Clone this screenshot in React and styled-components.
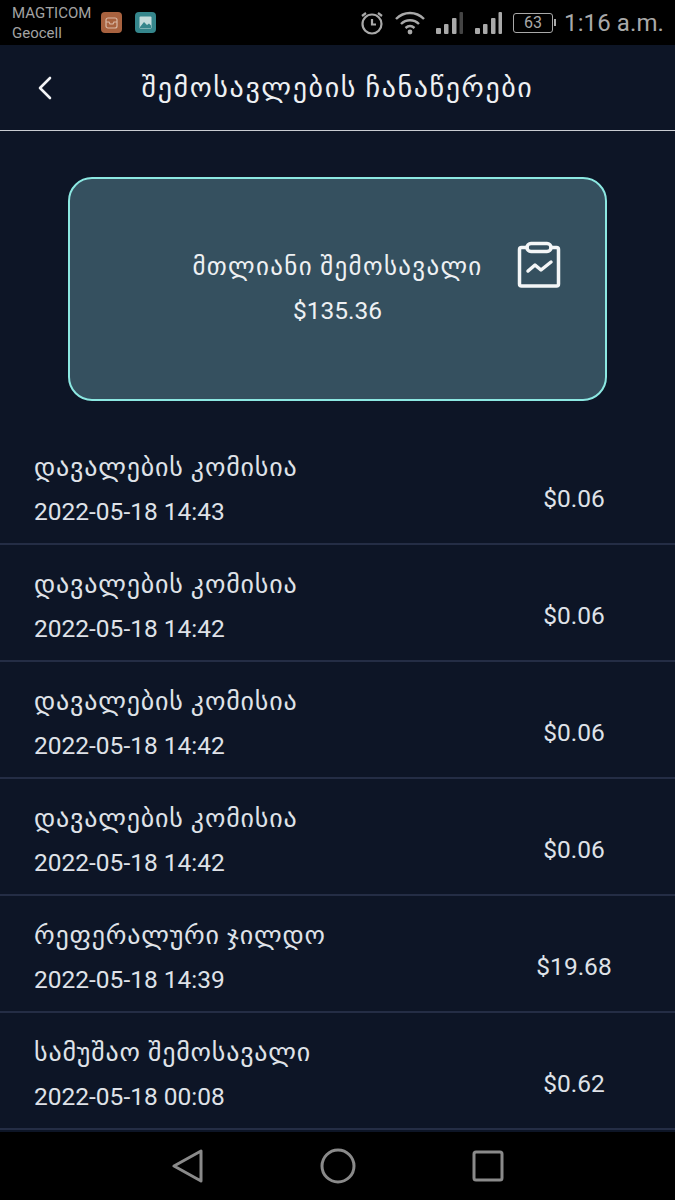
import React from "react";
import styled, { createGlobalStyle } from "styled-components";

const Global = createGlobalStyle`
  html, body { margin: 0; padding: 0; background: #0d1526; }
  #root { width: 675px; height: 1200px; }
  * { box-sizing: border-box; }
`;

const FONT = `Roboto, "DejaVu Sans", sans-serif`;

const Screen = styled.div`
  width: 675px;
  height: 1200px;
  display: flex;
  flex-direction: column;
  overflow: hidden;
  background: #0d1526;
  font-family: ${FONT};
`;

const StatusBar = styled.div`
  height: 45px;
  flex: none;
  background: #000;
  color: #a9a9a9;
  display: flex;
  align-items: center;
  padding: 0 11px 0 12px;
`;

const Carrier = styled.div`
  font-size: 15px;
  line-height: 20px;
  width: 89px;
  flex: none;
  color: #a3a3a3;
`;

const AppIcon = styled.div`
  width: 21px;
  height: 21px;
  border-radius: 4px;
  background: ${(p) => p.$bg};
  margin-right: 13px;
  display: flex;
  align-items: center;
  justify-content: center;
  flex: none;
`;

const StatusRight = styled.div`
  margin-left: auto;
  display: flex;
  align-items: center;
`;

const BatteryBox = styled.div`
  width: 40px;
  height: 20px;
  border: 1.5px solid #a9a9a9;
  border-radius: 3px;
  font-size: 16px;
  line-height: 17px;
  text-align: center;
  margin-left: 11px;
  position: relative;
  &::after {
    content: "";
    position: absolute;
    right: -4px;
    top: 5px;
    width: 2px;
    height: 7px;
    background: #a9a9a9;
  }
`;

const Clock = styled.div`
  font-size: 24px;
  margin-left: 11px;
  letter-spacing: 0.1px;
  color: #a9a9a9;
`;

const Header = styled.div`
  height: 86px;
  flex: none;
  display: flex;
  align-items: center;
  justify-content: center;
  position: relative;
  border-bottom: 1px solid #c9ccd2;
`;

const BackButton = styled.div`
  position: absolute;
  left: 36px;
  top: 30px;
  width: 18px;
  height: 26px;
  display: flex;
`;

const Title = styled.div`
  font-size: 28px;
  letter-spacing: 1.6px;
  color: #eef0f3;
`;

const Card = styled.div`
  margin: 46px 68px 27px;
  height: 224px;
  flex: none;
  border: 2px solid #8ce8e2;
  border-radius: 24px;
  background: #35505f;
  display: flex;
  flex-direction: column;
  align-items: center;
  padding-top: 70px;
  gap: 11px;
  position: relative;
  color: #eef0f3;
`;

const CardLabel = styled.div`
  font-size: 25px;
  letter-spacing: 1.3px;
  line-height: 36px;
`;

const CardValue = styled.div`
  font-size: 24.5px;
  line-height: 30px;
`;

const CardIcon = styled.div`
  position: absolute;
  left: 446px;
  top: 62px;
  display: flex;
`;

const List = styled.div`
  flex: 1;
  min-height: 0;
`;

const Row = styled.div`
  height: 117px;
  border-bottom: 2px solid #242d45;
  padding: 0 41px 0 34px;
  display: flex;
  align-items: center;
  justify-content: space-between;
  color: #dfe2e8;
`;

const RowText = styled.div`
  display: flex;
  flex-direction: column;
  gap: 13px;
  margin-top: 7px;
`;

const RowTitle = styled.div`
  font-size: 26px;
  letter-spacing: 0.8px;
  line-height: 32px;
`;

const RowDate = styled.div`
  font-size: 24.5px;
  line-height: 32px;
`;

const Amount = styled.div`
  width: 120px;
  text-align: center;
  font-size: 24.5px;
  margin-top: 26px;
`;

const NavBar = styled.div`
  height: 68px;
  flex: none;
  background: #000;
  display: grid;
  grid-template-columns: 150px 150px 150px;
  justify-content: center;
  align-items: center;
  justify-items: center;
`;

const rows = [
  ["დავალების კომისია", "2022-05-18 14:43", "$0.06"],
  ["დავალების კომისია", "2022-05-18 14:42", "$0.06"],
  ["დავალების კომისია", "2022-05-18 14:42", "$0.06"],
  ["დავალების კომისია", "2022-05-18 14:42", "$0.06"],
  ["რეფერალური ჯილდო", "2022-05-18 14:39", "$19.68"],
  ["სამუშაო შემოსავალი", "2022-05-18 00:08", "$0.62"],
];

const SignalBars = ({ dim, style }) => (
  <svg style={style} width="27" height="22" viewBox="0 0 27 22" fill="#a9a9a9">
    <rect x="0" y="16" width="5" height="6" rx="1" />
    <rect x="8" y="12" width="4.5" height="10" rx="1" />
    <rect x="16" y="6" width="4.5" height="16" rx="1" />
    <rect x="23.5" y="0" width="3.5" height="22" rx="1" fill={dim ? "#444" : "#a9a9a9"} />
  </svg>
);

export default function App() {
  return (
    <Screen>
      <Global />
      <StatusBar>
        <Carrier>MAGTICOM<br />Geocell</Carrier>
        <AppIcon $bg="#a8623f">
          <svg width="13" height="12" viewBox="0 0 13 12" fill="none" stroke="#d9b8a5" strokeWidth="1.2"><rect x="1" y="1" width="11" height="10" rx="2" /><path d="M1 5h3l1 2h3l1-2h3" /></svg>
        </AppIcon>
        <AppIcon $bg="#35868c">
          <svg width="13" height="13" viewBox="0 0 13 13"><rect x="0.5" y="0.5" width="12" height="12" rx="1" fill="#c4dcdc" /><path d="M1 11l4-5 3 3 2-1.5 2 2V12H1z" fill="#35868c" /></svg>
        </AppIcon>
        <StatusRight>
          <svg width="24" height="26" viewBox="0 0 24 26" fill="none" stroke="#a9a9a9" strokeWidth="2.2">
            <circle cx="12" cy="14" r="9.5" />
            <path d="M12 9v5.5h4" />
            <path d="M2 6l4-3M22 6l-4-3" />
          </svg>
          <svg style={{ marginLeft: 10 }} width="32" height="24" viewBox="0 0 32 24" fill="none" stroke="#a9a9a9" strokeWidth="2.4">
            <path d="M2 8C10 0 22 0 30 8" />
            <path d="M7 13c5-5 13-5 18 0" />
            <path d="M11.5 17c3-2.6 6-2.6 9 0" />
            <circle cx="16" cy="21" r="2.4" fill="#a9a9a9" stroke="none" />
          </svg>
          <SignalBars dim style={{ marginLeft: 10 }} />
          <SignalBars style={{ marginLeft: 12 }} />
          <BatteryBox>63</BatteryBox>
          <Clock>1:16 a.m.</Clock>
        </StatusRight>
      </StatusBar>
      <Header>
        <BackButton>
          <svg width="18" height="26" viewBox="0 0 18 26" fill="none" stroke="#f2f3f5" strokeWidth="2.6" strokeLinecap="round" strokeLinejoin="round">
            <path d="M14 3L4 13l10 10" />
          </svg>
        </BackButton>
        <Title>შემოსავლების ჩანაწერები</Title>
      </Header>
      <Card>
        <CardLabel>მთლიანი შემოსავალი</CardLabel>
        <CardValue>$135.36</CardValue>
        <CardIcon>
          <svg width="46" height="48" viewBox="0 0 46 48" fill="none" stroke="#f4f6f7" strokeWidth="3.5" strokeLinecap="round" strokeLinejoin="round">
            <path d="M11 6.5H5.5a2 2 0 0 0-2 2V43a2 2 0 0 0 2 2h35a2 2 0 0 0 2-2V8.5a2 2 0 0 0-2-2H35" />
            <rect x="11" y="2.5" width="24" height="8" rx="4" />
            <path d="M12 30l7-6 6 5 10-8" />
          </svg>
        </CardIcon>
      </Card>
      <List>
        {rows.map(([t, d, a], i) => (
          <Row key={i}>
            <RowText>
              <RowTitle>{t}</RowTitle>
              <RowDate>{d}</RowDate>
            </RowText>
            <Amount>{a}</Amount>
          </Row>
        ))}
      </List>
      <NavBar>
        <svg width="32" height="36" viewBox="0 0 32 36" fill="none" stroke="#8a8a8a" strokeWidth="3" strokeLinejoin="round">
          <path d="M29 3v30L2 18z" />
        </svg>
        <svg width="36" height="36" viewBox="0 0 36 36" fill="none" stroke="#8a8a8a" strokeWidth="3">
          <circle cx="18" cy="18" r="16" />
        </svg>
        <svg width="32" height="32" viewBox="0 0 32 32" fill="none" stroke="#8a8a8a" strokeWidth="3" strokeLinejoin="round">
          <rect x="2" y="2" width="28" height="28" rx="2" />
        </svg>
      </NavBar>
    </Screen>
  );
}
